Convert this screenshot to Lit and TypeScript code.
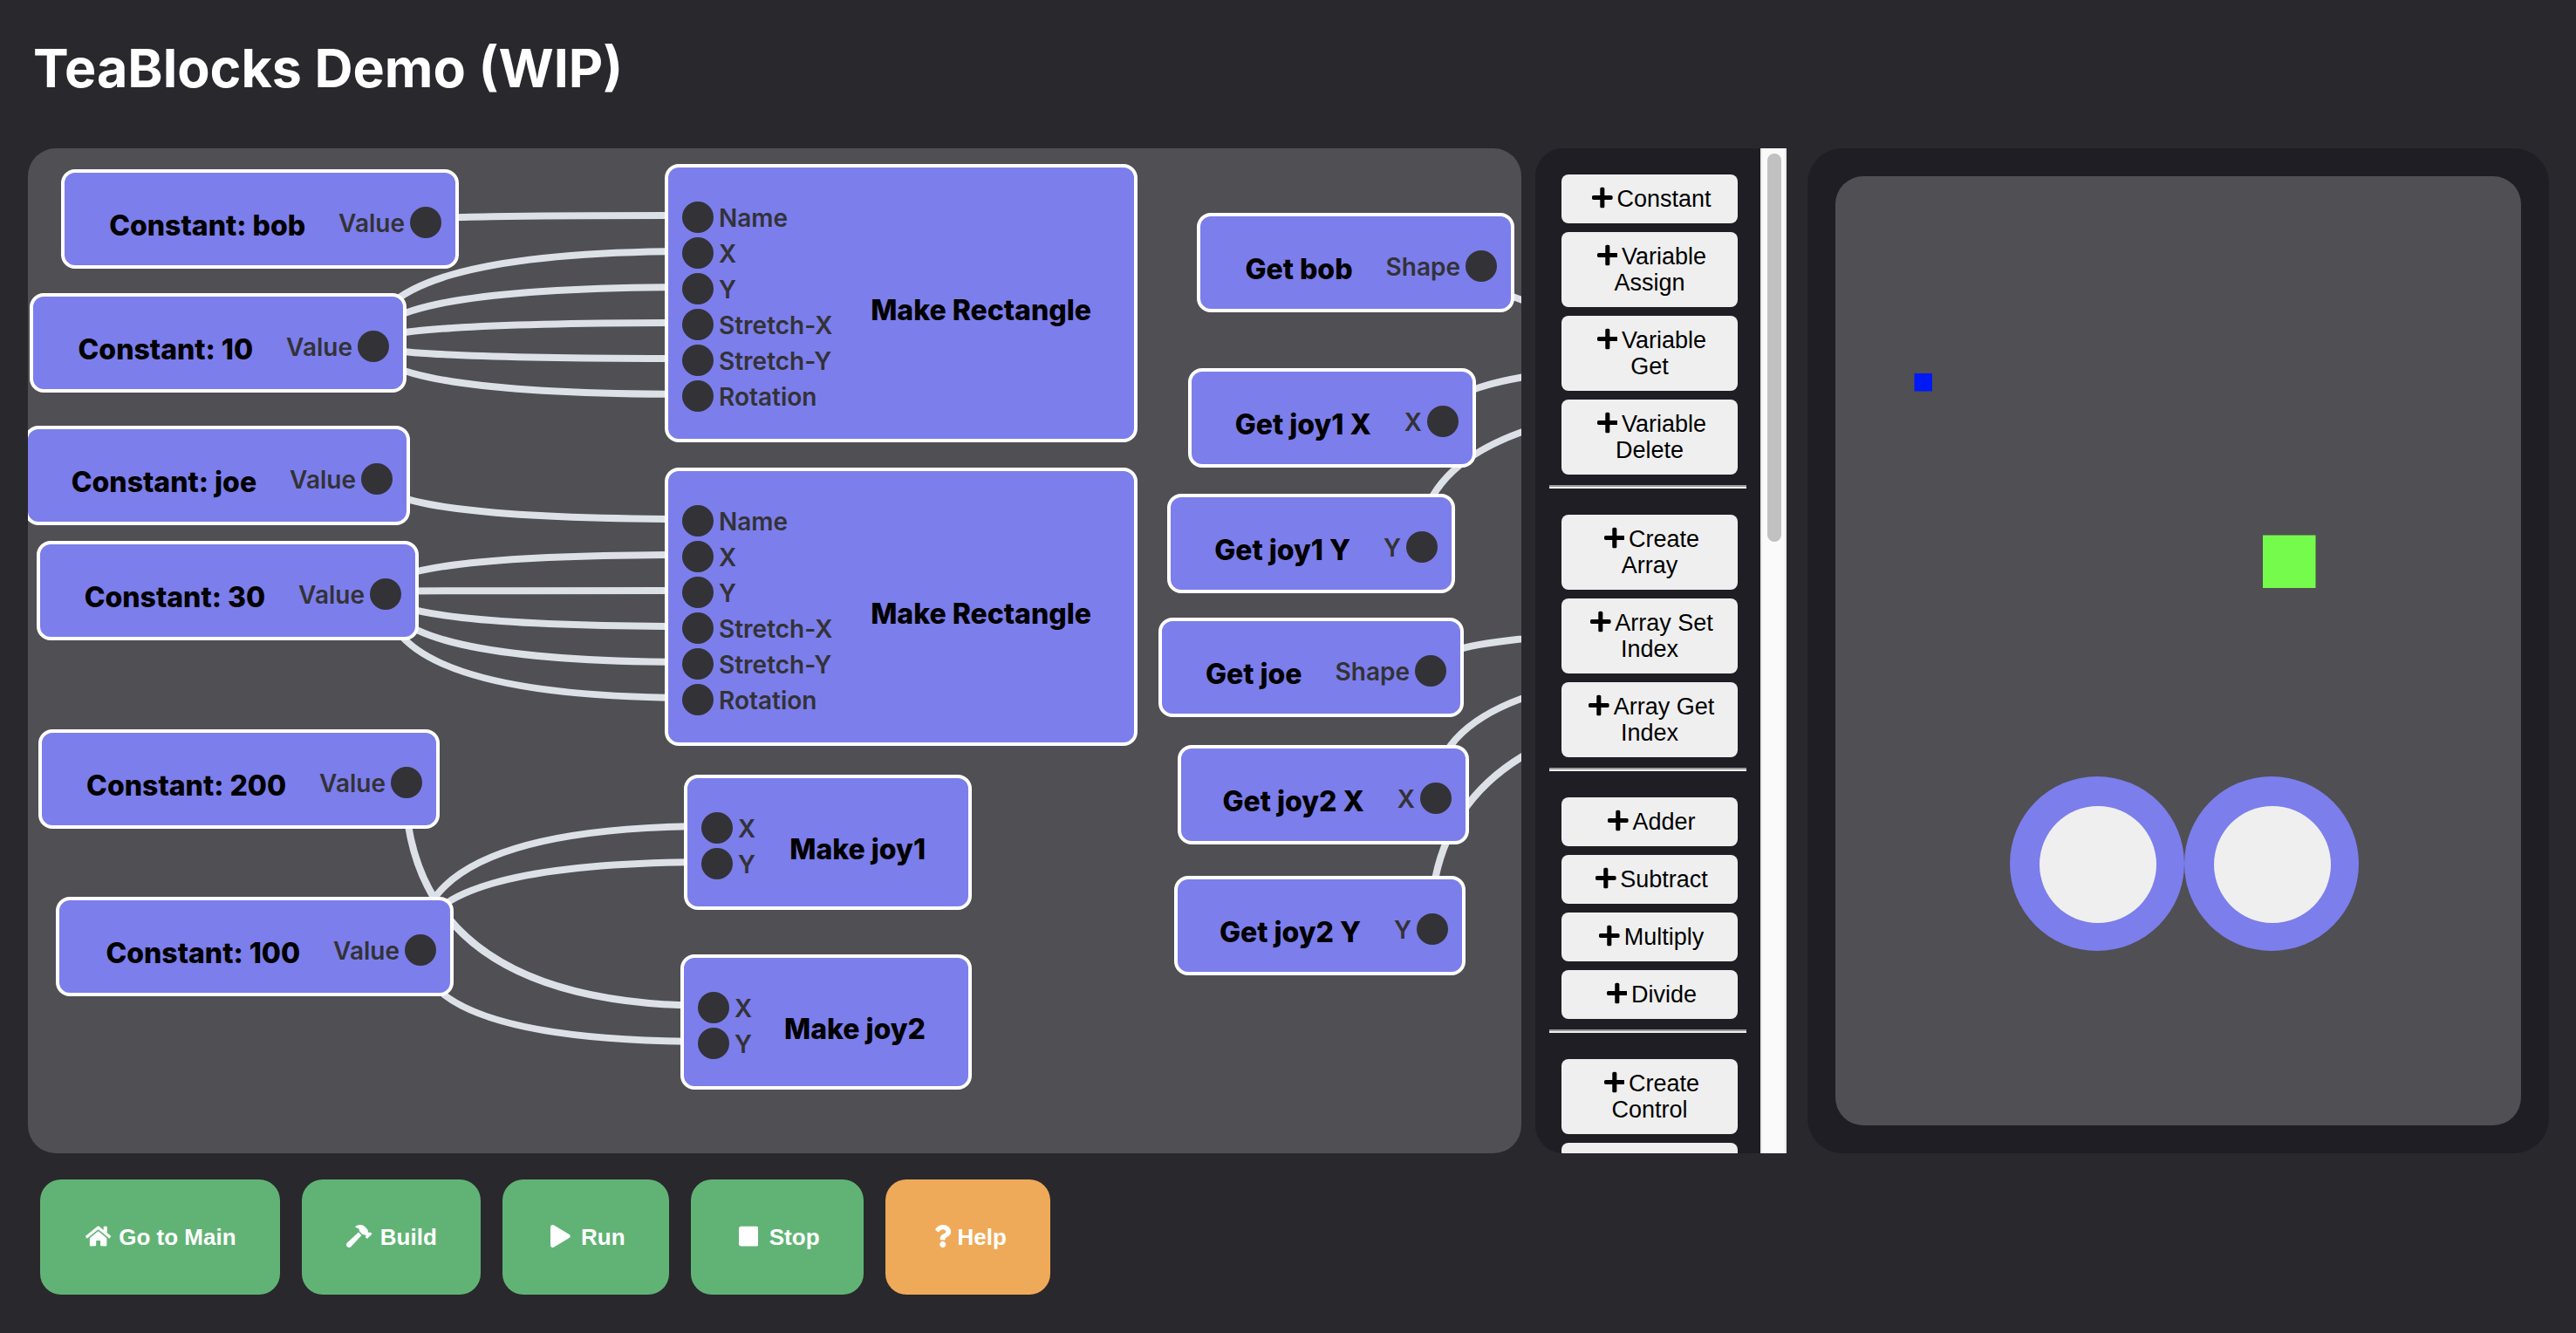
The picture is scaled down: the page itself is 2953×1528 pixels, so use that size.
import { LitElement, html, svg, css } from "lit";
import { customElement, property } from "lit/decorators.js";
import { classMap } from "lit/directives/class-map.js";
import { styleMap } from "lit/directives/style-map.js";

interface Icon {
  width: number;
  path: string;
}

const ICONS: Record<string, Icon> = {
  plus: {
    width: 448,
    path: "M416 208H272V64c0-17.67-14.33-32-32-32h-32c-17.67 0-32 14.33-32 32v144H32c-17.67 0-32 14.33-32 32v32c0 17.67 14.33 32 32 32h144v144c0 17.67 14.33 32 32 32h32c17.67 0 32-14.33 32-32V304h144c17.67 0 32-14.33 32-32v-32c0-17.67-14.33-32-32-32z",
  },
  home: {
    width: 576,
    path: "M280.37 148.26L96 300.11V464a16 16 0 0 0 16 16l112.06-.29a16 16 0 0 0 15.92-16V368a16 16 0 0 1 16-16h64a16 16 0 0 1 16 16v95.64a16 16 0 0 0 16 16.05L464 480a16 16 0 0 0 16-16V300L295.67 148.26a12.19 12.19 0 0 0-15.3 0zM571.6 251.47L488 182.56V44.05a12 12 0 0 0-12-12h-56a12 12 0 0 0-12 12v72.61L318.47 43a48 48 0 0 0-61 0L4.34 251.47a12 12 0 0 0-1.6 16.9l25.5 31A12 12 0 0 0 45.15 301l235.22-193.74a12.19 12.19 0 0 1 15.3 0L530.9 301a12 12 0 0 0 16.9-1.6l25.5-31a12 12 0 0 0-1.7-16.93z",
  },
  hammer: {
    width: 576,
    path: "M571.31 193.94l-22.63-22.63c-6.25-6.25-16.38-6.25-22.63 0l-11.31 11.31-28.9-28.9c5.63-21.31.36-44.9-16.35-61.61l-45.25-45.25c-62.48-62.48-163.79-62.48-226.28 0l90.51 45.25v18.75c0 16.97 6.74 33.25 18.75 45.25l49.14 49.14c16.71 16.71 40.3 21.98 61.61 16.35l28.9 28.9-11.31 11.31c-6.25 6.25-6.25 16.38 0 22.63l22.63 22.63c6.25 6.25 16.38 6.25 22.63 0l90.51-90.51c6.23-6.24 6.23-16.37-.02-22.62zm-286.72-15.2c-3.7-3.7-6.84-7.79-9.85-11.95L19.64 404.96c-25.57 23.88-26.26 64.19-1.53 88.93s65.05 24.05 88.92-1.53l238.13-255.07c-3.96-2.91-7.9-5.87-11.44-9.41l-49.14-49.14z",
  },
  play: {
    width: 448,
    path: "M424.4 214.7L72.4 6.6C43.8-10.3 0 6.1 0 47.9V464c0 37.5 40.7 60.1 72.4 41.3l352-208c31.4-18.5 31.5-64.1 0-82.6z",
  },
  stop: {
    width: 448,
    path: "M400 32H48C21.5 32 0 53.5 0 80v352c0 26.5 21.5 48 48 48h352c26.5 0 48-21.5 48-48V80c0-26.5-21.5-48-48-48z",
  },
  question: {
    width: 384,
    path: "M202.021 0C122.202 0 70.503 32.703 29.914 91.026c-7.363 10.58-5.093 25.086 5.178 32.874l43.138 32.709c10.373 7.865 25.132 6.026 33.253-4.148 25.049-31.381 43.63-49.449 82.757-49.449 30.764 0 68.816 19.799 68.816 49.631 0 22.552-18.617 34.134-48.993 51.164-35.423 19.86-82.299 44.576-82.299 106.405V320c0 13.255 10.745 24 24 24h72.471c13.255 0 24-10.745 24-24v-5.773c0-42.86 125.268-44.645 125.268-160.627C377.504 66.256 286.902 0 202.021 0zM192 373.459c-38.196 0-69.271 31.075-69.271 69.271 0 38.195 31.075 69.27 69.271 69.27s69.271-31.075 69.271-69.271-31.075-69.27-69.271-69.27z",
  },
};

/** Fixed-width glyph that sits in a line of text. */
@customElement("tb-icon")
class TbIcon extends LitElement {
  @property() name = "plus";

  static styles = css`
    :host {
      display: inline-block;
      width: 33px;
      text-align: center;
    }
    .glyph {
      height: 1em;
      display: inline-block;
      vertical-align: -0.125em;
      fill: currentColor;
    }
  `;

  render() {
    const icon = ICONS[this.name];
    return html`<svg class="glyph" viewBox="0 0 ${icon.width} 512" aria-hidden="true"><path d=${icon.path}></path></svg>`;
  }
}

interface BlockNode {
  id: string;
  title: string;
  x: number;
  y: number;
  width: number;
  inputs?: string[];
  output?: string;
}

const SHAPE_INPUTS = ["Name", "X", "Y", "Stretch-X", "Stretch-Y", "Rotation"];

const NODES: BlockNode[] = [
  { id: "c-bob", title: "Constant: bob", x: 38, y: 24, width: 456, output: "Value" },
  { id: "c-10", title: "Constant: 10", x: 2, y: 166, width: 432, output: "Value" },
  { id: "c-joe", title: "Constant: joe", x: -4, y: 318, width: 442, output: "Value" },
  { id: "c-30", title: "Constant: 30", x: 10, y: 450, width: 438, output: "Value" },
  { id: "c-200", title: "Constant: 200", x: 12, y: 666, width: 460, output: "Value" },
  { id: "c-100", title: "Constant: 100", x: 32, y: 858, width: 456, output: "Value" },
  { id: "rect-1", title: "Make Rectangle", x: 730, y: 18, width: 542, inputs: SHAPE_INPUTS },
  { id: "rect-2", title: "Make Rectangle", x: 730, y: 366, width: 542, inputs: SHAPE_INPUTS },
  { id: "joy-1", title: "Make joy1", x: 752, y: 718, width: 330, inputs: ["X", "Y"] },
  { id: "joy-2", title: "Make joy2", x: 748, y: 924, width: 334, inputs: ["X", "Y"] },
  { id: "g-bob", title: "Get bob", x: 1340, y: 74, width: 364, output: "Shape" },
  { id: "g-j1x", title: "Get joy1 X", x: 1330, y: 252, width: 330, output: "X" },
  { id: "g-j1y", title: "Get joy1 Y", x: 1306, y: 396, width: 330, output: "Y" },
  { id: "g-joe", title: "Get joe", x: 1296, y: 538, width: 350, output: "Shape" },
  { id: "g-j2x", title: "Get joy2 X", x: 1318, y: 684, width: 334, output: "X" },
  { id: "g-j2y", title: "Get joy2 Y", x: 1314, y: 834, width: 334, output: "Y" },
];

type Point = [number, number];

/** A wire runs from a node's output to an input (node id + row) or to a free point. */
const WIRES: { from: string; to: [string, number] | Point }[] = [
  { from: "c-bob", to: ["rect-1", 0] },
  ...[1, 2, 3, 4, 5].map((row) => ({ from: "c-10", to: ["rect-1", row] as [string, number] })),
  { from: "c-joe", to: ["rect-2", 0] },
  ...[1, 2, 3, 4, 5].map((row) => ({ from: "c-30", to: ["rect-2", row] as [string, number] })),
  { from: "c-200", to: ["joy-2", 0] },
  { from: "c-100", to: ["joy-2", 1] },
  { from: "c-100", to: ["joy-1", 0] },
  { from: "c-100", to: ["joy-1", 1] },
  { from: "g-bob", to: [2040, 203] },
  { from: "g-j1x", to: [2040, 244] },
  { from: "g-j1y", to: [2040, 285] },
  { from: "g-joe", to: [2010, 552] },
  { from: "g-j2x", to: [2010, 594] },
  { from: "g-j2y", to: [2010, 636] },
];

const PORT_X = 36;
const OUTPUT_Y = 58;
const INPUT_Y = 59;
const ROW = 41;

function nodeById(id: string): BlockNode {
  return NODES.find((n) => n.id === id)!;
}

function outputPoint(id: string): Point {
  const n = nodeById(id);
  return [n.x + n.width - PORT_X - 4, n.y + OUTPUT_Y];
}

function targetPoint(to: [string, number] | Point): Point {
  if (typeof to[0] === "number") return to as Point;
  const n = nodeById(to[0]);
  return [n.x + PORT_X, n.y + INPUT_Y + ROW * to[1]];
}

@customElement("tb-canvas")
class TbCanvas extends LitElement {
  static styles = css`
    :host {
      display: block;
      position: relative;
      overflow: hidden;
      border-radius: 32px;
      background: #504f54;
      font-family: Inter, "Liberation Sans", sans-serif;
    }
    .wires {
      position: absolute;
      inset: 0;
      width: 100%;
      height: 100%;
    }
    .wire {
      fill: none;
      stroke: #dce1e8;
      stroke-width: 8;
    }
    .node {
      position: absolute;
      box-sizing: border-box;
      display: flex;
      align-items: center;
      padding: 36px 16px 29px;
      border: 4px solid #fff;
      border-radius: 16px;
      background: #7c7eeb;
      white-space: nowrap;
    }
    .title {
      flex: 1;
      margin: 0;
      padding: 8px 0 0;
      font-size: 32px;
      line-height: 33px;
      font-weight: 800;
      color: #000;
      text-align: right;
    }
    .sink .title {
      padding-right: 33px;
    }
    .source .title {
      padding-right: 38px;
    }
    .ports {
      display: flex;
      flex-direction: column;
    }
    .port {
      display: flex;
      align-items: center;
      gap: 6px;
      height: 41px;
    }
    .dot {
      width: 36px;
      height: 36px;
      border-radius: 50%;
      background: #333237;
    }
    .label {
      padding-top: 2px;
      font-size: 28px;
      line-height: 34px;
      font-weight: 600;
      color: #333237;
    }
  `;

  private wire(from: Point, to: Point) {
    return svg`<path class="wire" d="M${from[0]} ${from[1]}Q${from[0]} ${to[1]} ${to[0]} ${to[1]}"></path>`;
  }

  private node(n: BlockNode) {
    return html`
      <section
        class=${classMap({ node: true, sink: !!n.inputs, source: !!n.output })}
        style=${styleMap({ left: `${n.x}px`, top: `${n.y}px`, width: `${n.width}px` })}
      >
        ${n.inputs
          ? html`<div class="ports">
              ${n.inputs.map((t) => html`<div class="port"><span class="dot"></span><span class="label">${t}</span></div>`)}
            </div>`
          : ""}
        <h2 class="title">${n.title}</h2>
        ${n.output
          ? html`<div class="ports">
              <div class="port"><span class="label">${n.output}</span><span class="dot"></span></div>
            </div>`
          : ""}
      </section>
    `;
  }

  render() {
    return html`
      <svg class="wires" aria-hidden="true">${WIRES.map((w) => this.wire(outputPoint(w.from), targetPoint(w.to)))}</svg>
      ${NODES.map((n) => this.node(n))}
    `;
  }
}

const PALETTE: string[][] = [
  ["Constant", "Variable Assign", "Variable Get", "Variable Delete"],
  ["Create Array", "Array Set Index", "Array Get Index"],
  ["Adder", "Subtract", "Multiply", "Divide"],
  ["Create Control", ""],
];

@customElement("tb-palette")
class TbPalette extends LitElement {
  static styles = css`
    :host {
      display: flex;
      min-height: 0;
      overflow: hidden;
      border-radius: 32px 0 0 32px;
      background: #1f1e24;
    }
    .list {
      flex: 1;
      height: 0;
      min-height: 100%;
      overflow: hidden;
      box-sizing: border-box;
      padding: 0 16px;
    }
    .group {
      display: flex;
      flex-direction: column;
      gap: 10px;
      padding: 30px 10px 12px 14px;
    }
    .group + .group {
      border-top: 2px solid #9a9a9a;
      box-shadow: inset 0 2px 0 #eeeeee;
      padding-top: 32px;
    }
    .add {
      min-height: 56px;
      padding: 13px 16px;
      border: 0;
      border-radius: 8px;
      background: #efefef;
      color: #000;
      font: 400 27px/30px "Liberation Sans", Arial, sans-serif;
      text-align: center;
    }
    .track {
      box-sizing: border-box;
      width: 30px;
      padding: 6px;
      border: solid #e8e8e8;
      border-width: 0 2px;
      background: #fafafa;
    }
    .thumb {
      width: 16px;
      height: 39%;
      border-radius: 8px;
      background: #c1c1c1;
    }
  `;

  render() {
    return html`
      <nav class="list" aria-label="Blocks">
        ${PALETTE.map(
          (group) => html`<div class="group">
            ${group.map((t) =>
              t
                ? html`<button class="add" type="button"><tb-icon name="plus"></tb-icon>${t}</button>`
                : html`<button class="add" type="button" aria-label="Control"></button>`
            )}
          </div>`
        )}
      </nav>
      <div class="track"><div class="thumb"></div></div>
    `;
  }
}

@customElement("tb-stage")
class TbStage extends LitElement {
  static styles = css`
    :host {
      display: flex;
      box-sizing: border-box;
      padding: 32px;
      border-radius: 40px;
      background: #1f1e24;
    }
    .screen {
      flex: 1;
      width: 100%;
      border-radius: 32px;
      background: #504f54;
    }
    .ring {
      fill: #7c7eeb;
    }
    .stick {
      fill: #efefef;
    }
    .bob {
      fill: #0019f5;
    }
    .joe {
      fill: #75fb4c;
    }
  `;

  render() {
    return html`
      <svg class="screen" role="img" aria-label="Stage">
        <rect class="bob" x="90.5" y="226" width="20.5" height="20.5"></rect>
        <rect class="joe" x="490" y="411.5" width="60.5" height="60.5"></rect>
        <circle class="ring" cx="300" cy="788" r="100"></circle>
        <circle class="ring" cx="500" cy="788" r="100"></circle>
        <circle class="stick" cx="301" cy="789" r="67"></circle>
        <circle class="stick" cx="501" cy="789" r="67"></circle>
      </svg>
    `;
  }
}

@customElement("app-root")
class AppRoot extends LitElement {
  static styles = css`
    :host {
      display: flex;
      flex-direction: column;
      box-sizing: border-box;
      min-height: 100vh;
      padding: 0 31px 44px 32px;
      background: #29282d;
    }
    .header {
      height: 170px;
      padding: 40px 6px 0;
      box-sizing: border-box;
    }
    .heading {
      margin: 0;
      font: 700 61px/76px Inter, "Liberation Sans", sans-serif;
      color: #fff;
    }
    .workspace {
      flex: 1;
      display: grid;
      grid-template-columns: minmax(0, 856fr) 304px minmax(0, 437fr);
      grid-template-rows: minmax(0, 1fr);
    }
    .palette {
      margin-left: 16px;
    }
    .stage {
      margin-left: 24px;
    }
    .actions {
      display: flex;
      gap: 25px;
      padding: 30px 14px 0;
    }
    .action {
      height: 132px;
      padding: 0 50px;
      border: 0;
      border-radius: 24px;
      background: #61b375;
      color: #fff;
      font: 700 26px/30px "Liberation Sans", Arial, sans-serif;
      white-space: nowrap;
    }
    .help {
      background: #eeaa59;
    }
  `;

  render() {
    return html`
      <header class="header"><h1 class="heading">TeaBlocks Demo (WIP)</h1></header>
      <main class="workspace">
        <tb-canvas></tb-canvas>
        <tb-palette class="palette"></tb-palette>
        <tb-stage class="stage"></tb-stage>
      </main>
      <footer class="actions">
        <button class="action" type="button"><tb-icon name="home"></tb-icon> Go to Main</button>
        <button class="action" type="button"><tb-icon name="hammer"></tb-icon> Build</button>
        <button class="action" type="button"><tb-icon name="play"></tb-icon> Run</button>
        <button class="action" type="button"><tb-icon name="stop"></tb-icon> Stop</button>
        <button class="action help" type="button"><tb-icon name="question"></tb-icon>Help</button>
      </footer>
    `;
  }
}
